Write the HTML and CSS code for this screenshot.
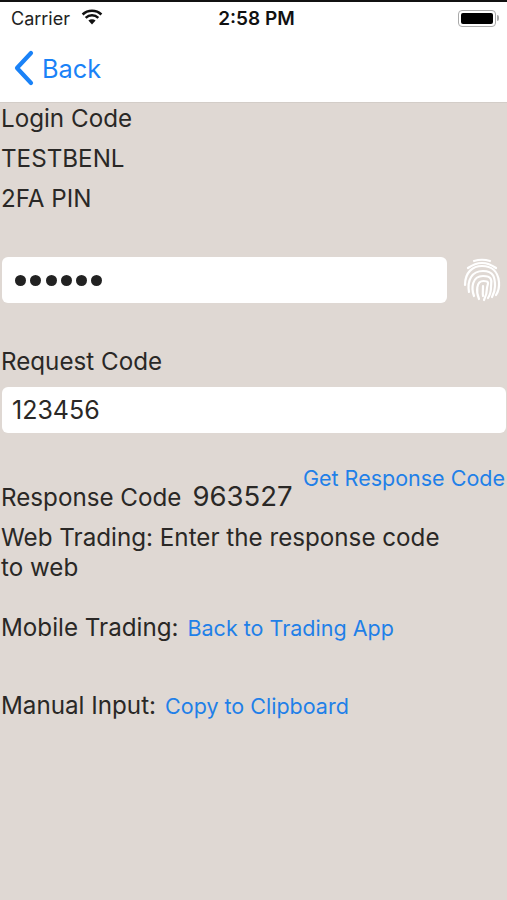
FILE: index.html
```
<!DOCTYPE html>
<html lang="en">
<head>
<meta charset="utf-8">
<title>Back</title>
<link rel="stylesheet" href="styles.css">
</head>
<body>
<header class="top">
  <div class="status">
    <div class="status-left">
      <span>Carrier</span>
      <svg class="wifi" width="24" height="17" viewBox="0 0 24 17"><path d="M12 16.500 8.400 12.600a5.200 5.200 0 0 1 7.200 0Z" fill="#111"/><path d="M5.700 9.900a9 9 0 0 1 12.600 0M2.600 6.500a13.400 13.400 0 0 1 18.800 0" fill="none" stroke="#111" stroke-width="2.500"/></svg>
    </div>
    <div class="status-time">2:58 PM</div>
    <div class="battery"><span class="battery-body"><span class="battery-fill"></span></span><span class="battery-cap"></span></div>
  </div>
  <nav class="nav">
    <svg class="chevron" width="22" height="36" viewBox="0 0 22 36"><path d="M18 3 4 18l14 15" fill="none" stroke="#1a82f7" stroke-width="4.200" stroke-linecap="round" stroke-linejoin="round"/></svg>
    <span class="back">Back</span>
  </nav>
</header>
<main class="content">
  <div class="line">Login Code</div>
  <div class="line">TESTBENL</div>
  <div class="line">2FA PIN</div>
  <div class="pin-row">
    <div class="field pin-field"><span class="dot"></span><span class="dot"></span><span class="dot"></span><span class="dot"></span><span class="dot"></span><span class="dot"></span></div>
    <svg class="finger" width="38" height="44" viewBox="0 0 38 44" fill="none" stroke="#fff" stroke-width="2.200" stroke-linecap="round">
      <path d="M11 3Q19 .5 27 3"/>
      <path d="M5 10Q19 0 33 10"/>
      <path d="M2 27C2 14 10 8 19 8S35 13 36 24C36.500 30 35 34 33 37"/>
      <path d="M6 34C4 22 9 13 20 13S32 20 32 28C32 32 31 35 29 39"/>
      <path d="M11 38C8 30 9 18 20 18S28 24 28 29C28 33 27 37 25 40"/>
      <path d="M16 41C13 34 13 23 20.500 23S24 27 24 30C24 34 23 38 21 42"/>
      <path d="M20 28C20 33 19.500 36 20 38"/>
    </svg>
  </div>
  <div class="line request-label">Request Code</div>
  <div class="field request-field">123456</div>
  <div class="response-row">
    <span>Response Code</span>
    <span class="code">963527</span>
    <a class="link get-link">Get Response Code</a>
  </div>
  <p class="note">Web Trading: Enter the response code<br>to web</p>
  <div class="action mobile"><span>Mobile Trading:</span><a class="link">Back to Trading App</a></div>
  <div class="action manual"><span>Manual Input:</span><a class="link">Copy to Clipboard</a></div>
</main>
</body>
</html>
```
FILE: styles.css
```
* { box-sizing: border-box; }
html, body { margin: 0; height: 100%; }
body {
  background: #dfd8d3;
  color: #2a2826;
  font-family: Inter, "Liberation Sans", sans-serif;
  font-size: 24.200px;
  overflow: hidden;
}
.top {
  height: 103px;
  background: #fff;
  border-top: 2px solid #111;
  border-bottom: 1px solid #d3cdc8;
  display: flex;
  flex-direction: column;
}
.status {
  height: 32px;
  padding: 0 8px 0 11px;
  display: flex;
  align-items: center;
  justify-content: space-between;
  font-size: 18px;
  color: #222;
}
.status-left { display: flex; align-items: center; gap: 10px; width: 130px; }
.wifi { margin-top: -3px; }
.status-time { font-weight: 600; font-size: 19px; color: #111; margin-left: 3px; }
.battery { display: flex; align-items: center; width: 130px; justify-content: flex-end; }
.battery-body {
  width: 38px; height: 17px; padding: 2px;
  border: 1.500px solid #aaa; border-radius: 4px; display: block;
}
.battery-fill { display: block; height: 100%; background: #000; border-radius: 2px; }
.battery-cap { width: 2px; height: 6px; background: #aaa; border-radius: 0 2px 2px 0; margin-left: 1px; }
.nav { display: flex; align-items: center; padding: 0 0 0 13px; gap: 7px; height: 68px; }
.back { color: #1a82f7; font-size: 25.300px; }
.content { display: flex; flex-direction: column; padding: 1px 0 0 1px; }
.line { height: 40px; line-height: 30px; }
.pin-row { display: flex; align-items: center; margin: 33px 0 0 1px; }
.field {
  background: #fff; height: 46px; border-radius: 6px; display: flex; align-items: center; padding-left: 10px;
}
.pin-field { width: 445px; gap: 4.300px; padding-left: 13px; }
.dot { width: 11px; height: 11px; border-radius: 50%; background: #222; }
.finger { margin-left: 16px; }
.request-label { margin-top: 44px; }
.request-field { width: 504px; margin-left: 1px; font-size: 25px; }
.response-row { position: relative; display: flex; align-items: baseline; margin-top: 45px; height: 36px; line-height: 36px; }
.code { font-size: 27.500px; margin-left: 11px; }
.link { color: #1f80e8; font-size: 21.500px; }
.get-link { position: absolute; right: 2px; top: -18px; }
.note { margin: 9px 0 0; line-height: 30px; }
.action { display: flex; align-items: baseline; gap: 9px; }
.mobile { margin-top: 30px; }
.manual { margin-top: 49px; }
```
